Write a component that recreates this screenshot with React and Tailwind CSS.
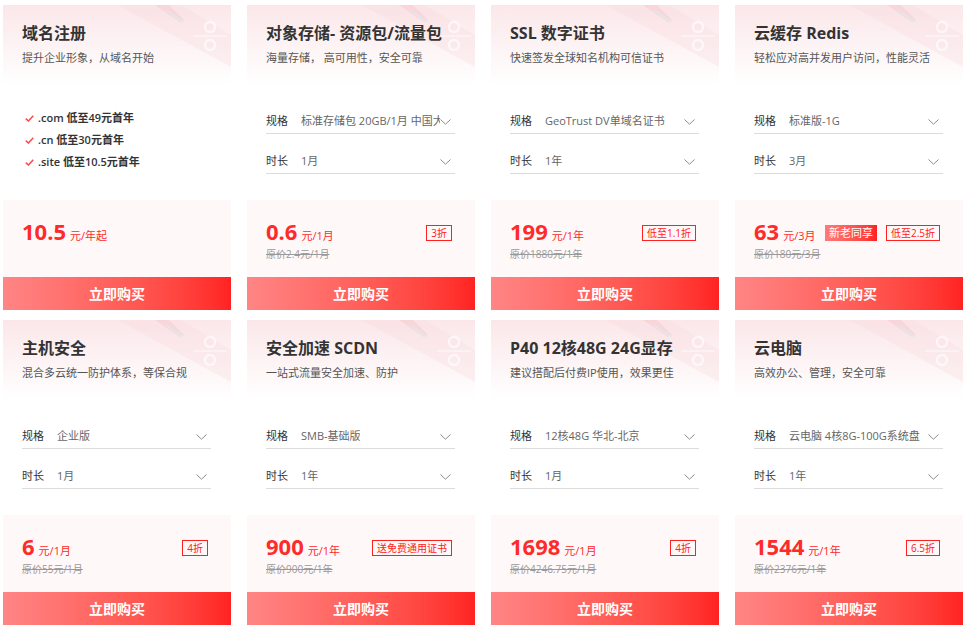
import React from 'react';

const products = [
  {
    title: '域名注册',
    desc: '提升企业形象，从域名开始',
    checks: ['.com 低至49元首年', '.cn 低至30元首年', '.site 低至10.5元首年'],
    price: '10.5',
    unit: '元/年起',
  },
  {
    title: '对象存储- 资源包/流量包',
    desc: '海量存储， 高可用性，安全可靠',
    spec: '标准存储包 20GB/1月 中国大陆通用',
    term: '1月',
    price: '0.6',
    unit: '元/1月',
    orig: '原价2.4元/1月',
    tags: ['3折'],
  },
  {
    title: 'SSL 数字证书',
    desc: '快速签发全球知名机构可信证书',
    spec: 'GeoTrust DV单域名证书',
    term: '1年',
    price: '199',
    unit: '元/1年',
    orig: '原价1880元/1年',
    tags: ['低至1.1折'],
  },
  {
    title: '云缓存 Redis',
    desc: '轻松应对高并发用户访问，性能灵活',
    spec: '标准版-1G',
    term: '3月',
    price: '63',
    unit: '元/3月',
    orig: '原价180元/3月',
    badge: '新老同享',
    tags: ['低至2.5折'],
  },
  {
    title: '主机安全',
    desc: '混合多云统一防护体系，等保合规',
    spec: '企业版',
    term: '1月',
    price: '6',
    unit: '元/1月',
    orig: '原价55元/1月',
    tags: ['4折'],
  },
  {
    title: '安全加速 SCDN',
    desc: '一站式流量安全加速、防护',
    spec: 'SMB-基础版',
    term: '1年',
    price: '900',
    unit: '元/1年',
    orig: '原价900元/1年',
    tags: ['送免费通用证书'],
  },
  {
    title: 'P40 12核48G 24G显存',
    desc: '建议搭配后付费IP使用，效果更佳',
    spec: '12核48G 华北-北京',
    term: '1月',
    price: '1698',
    unit: '元/1月',
    orig: '原价4246.75元/1月',
    tags: ['4折'],
  },
  {
    title: '云电脑',
    desc: '高效办公、管理，安全可靠',
    spec: '云电脑 4核8G-100G系统盘',
    term: '1年',
    price: '1544',
    unit: '元/1年',
    orig: '原价2376元/1年',
    tags: ['6.5折'],
  },
];

function HeaderArt() {
  // faint pink ribbon + percent sign behind the title
  return (
    <svg className="absolute inset-0 h-full w-full" viewBox="0 0 228 80" preserveAspectRatio="none">
      <polygon points="115,0 178,0 228,30 228,62" fill="#f8d6db" opacity="0.3" />
      <polygon points="152,0 166,0 181,15 177,17" fill="#f3bcc4" opacity="0.35" />
      <polygon points="160,4 166,6 181,16 179,18" fill="#d9eff1" opacity="0.6" />
      <circle cx="207" cy="22" r="5" fill="none" stroke="#ffffff" strokeWidth="2.5" opacity="0.6" />
      <circle cx="207" cy="40" r="5" fill="none" stroke="#ffffff" strokeWidth="2.5" opacity="0.6" />
      <line x1="190" y1="31" x2="224" y2="31" stroke="#ffffff" strokeWidth="2" opacity="0.4" />
    </svg>
  );
}

function Chevron() {
  return (
    <svg width="11" height="6" viewBox="0 0 11 6" className="shrink-0">
      <path d="M0.5 0.5 L5.5 5.2 L10.5 0.5" fill="none" stroke="#8c8c8c" strokeWidth="1" />
    </svg>
  );
}

function Check() {
  return (
    <svg width="9" height="7" viewBox="0 0 9 7" className="shrink-0">
      <path d="M0.8 3.6 L3.4 6 L8.3 0.8" fill="none" stroke="#ff4d4f" strokeWidth="1.6" />
    </svg>
  );
}

function SelectRow({ label, value, className }) {
  return (
    <div className={`flex h-[26px] items-center border-b border-[#dcdcdc] pr-[4px] pt-[2px] ${className || ''}`}>
      <span className="w-[35px] shrink-0 text-[11px] text-[#333]">{label}</span>
      <span className="min-w-0 flex-1 overflow-hidden whitespace-nowrap pr-[4px] text-[11px] text-[#666]">{value}</span>
      <Chevron />
    </div>
  );
}

function Card({ p }) {
  return (
    <div className="flex h-[305px] flex-col bg-white">
      <div className="relative h-[80px] overflow-hidden bg-gradient-to-b from-[#fbe7ea] via-[#fdf3f4] to-white px-[19px] pt-[17px]">
        <HeaderArt />
        <div className="relative text-[16px] font-bold leading-[22px] text-[#333]">{p.title}</div>
        <div className="relative mt-[5px] whitespace-nowrap text-[11px] leading-[18px] text-[#555]">{p.desc}</div>
      </div>

      <div className="h-[115px] px-[19px]">
        {p.checks ? (
          <ul className="pt-[22px]">
            {p.checks.map((c) => (
              <li key={c} className="flex items-center gap-[4px] pl-[3px] text-[11px] font-semibold leading-[22px] text-[#333]">
                <Check />
                {c}
              </li>
            ))}
          </ul>
        ) : (
          <div className="pt-[23px] pr-px">
            <SelectRow label="规格" value={p.spec} />
            <SelectRow label="时长" value={p.term} className="mt-[14px]" />
          </div>
        )}
      </div>

      <div className="h-[77px] bg-[#fff8f8] pl-[19px] pr-[23px] pt-[18px]">
        <div className="flex items-center justify-between">
          <div className="flex items-baseline text-[#ff2a2a]">
            <span className="text-[22px] font-bold leading-[26px]">{p.price}</span>
            <span className="ml-[4px] text-[11px]">{p.unit}</span>
          </div>
          <div className="mt-[4px] flex items-center gap-[9px]">
            {p.badge && (
              <span className="flex h-[16px] items-center bg-gradient-to-r from-[#ff7a7a] to-[#ff2020] px-[4px] text-[11px] text-white">
                {p.badge}
              </span>
            )}
            {(p.tags || []).map((t) => (
              <span key={t} className="flex h-[16px] items-center border border-[#ff2020] px-[4px] text-[10px] text-[#ff2020]">
                {t}
              </span>
            ))}
          </div>
        </div>
        {p.orig && (
          <div className="mt-[2px] text-[10px] leading-[14px] text-[#999] line-through">{p.orig}</div>
        )}
      </div>

      <button className="h-[33px] w-full bg-gradient-to-r from-[#ff8585] to-[#ff2222] text-[14px] font-bold text-white">
        立即购买
      </button>
    </div>
  );
}

export default function App() {
  return (
    <div
      className="min-h-screen bg-white pl-[3px] pt-[5px]"
      style={{ fontFamily: '"Open Sans", "Noto Sans CJK SC", sans-serif' }}
    >
      <div className="grid grid-cols-[repeat(4,228px)] gap-x-4 gap-y-[10px]">
        {products.map((p) => (
          <Card key={p.title} p={p} />
        ))}
      </div>
    </div>
  );
}
